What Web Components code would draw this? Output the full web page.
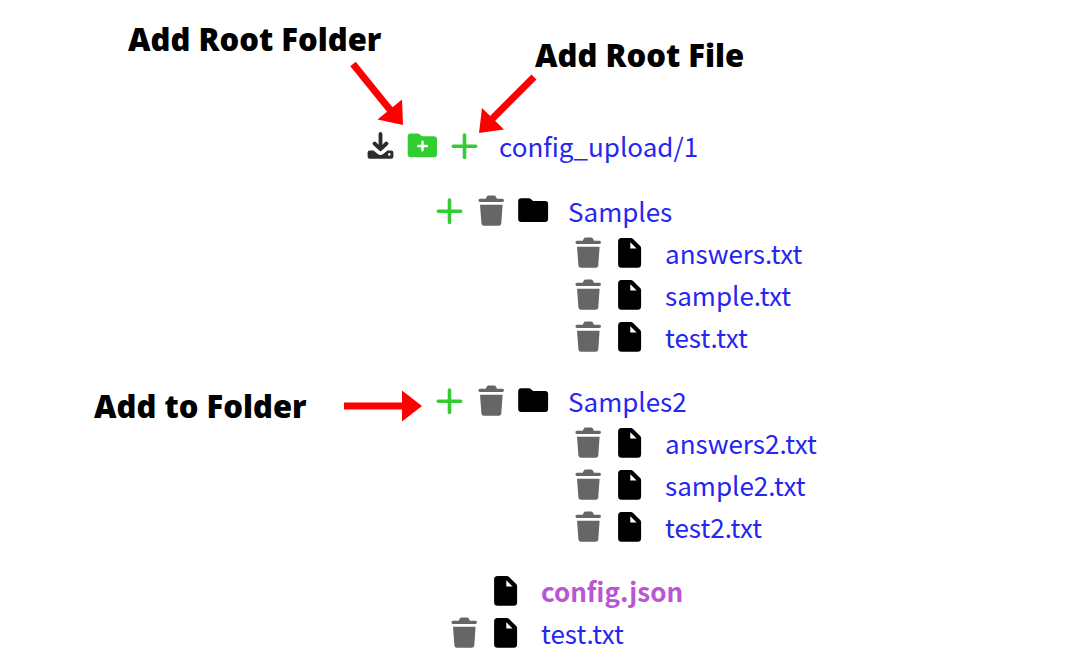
<!DOCTYPE html>
<html lang="en">
<head>
<meta charset="utf-8">
<meta name="viewport" content="width=device-width, initial-scale=1">
<title>config_upload</title>
<style>
  body { margin: 0; background: #fff; font-family: "Noto Sans CJK SC", "Noto Sans", sans-serif; }
</style>
</head>
<body>
<file-manager>
  <tree-root name="config_upload/1">
    <tree-folder name="Samples">
      <tree-file name="answers.txt"></tree-file>
      <tree-file name="sample.txt"></tree-file>
      <tree-file name="test.txt"></tree-file>
    </tree-folder>
    <tree-folder name="Samples2">
      <tree-file name="answers2.txt"></tree-file>
      <tree-file name="sample2.txt"></tree-file>
      <tree-file name="test2.txt"></tree-file>
    </tree-folder>
    <root-files>
      <tree-file name="config.json" locked></tree-file>
      <tree-file name="test.txt"></tree-file>
    </root-files>
  </tree-root>
  <help-callout slot="help" target="root-folder">Add Root Folder</help-callout>
  <help-callout slot="help" target="root-file">Add Root File</help-callout>
  <help-callout slot="help" target="folder">Add to Folder</help-callout>
</file-manager>

<script>
const ICONS = {
  download: `<g fill="none" stroke="#2c2c2c" stroke-linecap="round" stroke-linejoin="round" stroke-width="3.8"><path d="M21.500 7.900V22"/><path d="M15.500 17.500l6 5.700 6-5.700"/></g><path fill="#2c2c2c" fill-rule="evenodd" d="M10.900 24.400h3.600l4.300 3.700q2.700 2 5.400 0l4.300-3.700h3.600q2.300 0 2.300 2.200v4q0 2.200-2.300 2.200H10.900q-2.300 0-2.300-2.200v-4q0-2.200 2.300-2.200zM30.300 27.100a1.300 1.300 0 1 0 0 2.600a1.300 1.300 0 0 0 0-2.600z"/>`,
  folderPlus: `<path fill="#32cd32" d="M9.500 7.500h7q1.200 0 2 .8l1.400 1.300q.8.700 2 .7h11.100q3 0 3 3v15q0 3-3 3H9.700q-3 0-3-3V10.500q0-3 2.800-3z"/><path d="M21.500 15.700v8.600M17.200 20h8.600" stroke="#fff" stroke-width="2.500" stroke-linecap="round"/>`,
  plus: `<path d="M21.500 9v22.400M10.300 20.200h22.400" stroke="#32cd32" stroke-width="3.600" stroke-linecap="round"/>`,
  trash: `<g fill="#666"><path d="M18.500 4.500h5.700q1 0 1.500.8l1.300 2.400h5.400q1.600 0 1.600 1.650t-1.600 1.650H10q-1.600 0-1.600-1.650T10 7.700h5.700L17 5.300q.5-.8 1.500-.8z"/><path d="M10 13.700h22.600l-1.300 18.500q-.2 2.500-2.600 2.500H14q-2.400 0-2.600-2.500z"/></g>`,
  folder: `<path d="M9.200 7.300h7.700q1.200 0 2 .8l1.500 1.300q.8.700 2 .7h10.700q3 0 3 3V28q0 3-3 3H9.200q-3 0-3-3V10.300q0-3 3-3z"/>`,
  file: `<path fill-rule="evenodd" d="M12.500 5h9.500q1 0 1.800.8l7.400 7.200q.9.900.9 2v16.200q0 3.500-3.500 3.500H12.600q-3.500 0-3.500-3.500V8.500q0-3.500 3.400-3.500zM21.300 9.300v6.300h6.300z"/>`
};
const icon = name => `<svg width="42" height="42" viewBox="0 0 42 42" aria-hidden="true">${ICONS[name]}</svg>`;
const action = (name, label) => `<button type="button" aria-label="${label}">${icon(name)}</button>`;

const ROW_CSS = `
  .row { display: flex; height: 42px; }
  button { flex: none; width: 42px; height: 42px; margin: 0; padding: 0; border: 0; background: none; cursor: pointer; }
  svg { display: block; flex: none; }
  a { margin-left: 14px; color: #2626f0; font-size: 26px; line-height: 40px; text-decoration: none; white-space: nowrap; }
`;

class FileManager extends HTMLElement {
  constructor() {
    super();
    this.attachShadow({ mode: "open" }).innerHTML = `
      <style>
        :host { display: block; }
        main { position: relative; margin-left: max(0px, calc(50% - 181px)); padding: 126px 0 16px; }
      </style>
      <main><slot></slot><slot name="help"></slot></main>`;
  }
}

class TreeRoot extends HTMLElement {
  connectedCallback() {
    if (this.shadowRoot) return;
    const name = this.getAttribute("name");
    this.attachShadow({ mode: "open" }).innerHTML = `
      <style>
        :host { display: block; }
        .groups { display: flex; flex-direction: column; gap: 22px; padding-top: 23px; }
        ${ROW_CSS}
      </style>
      <div class="row">
        ${action("download", "Download " + name)}${action("folderPlus", "Add root folder")}${action("plus", "Add root file")}
        <a href="#root">${name}</a>
      </div>
      <div class="groups"><slot></slot></div>`;
  }
}

class TreeFolder extends HTMLElement {
  connectedCallback() {
    if (this.shadowRoot) return;
    const name = this.getAttribute("name");
    this.attachShadow({ mode: "open" }).innerHTML = `
      <style>
        :host { display: block; margin-left: 69px; }
        .children { padding-left: 139px; }
        ${ROW_CSS}
      </style>
      <div class="row">
        ${action("plus", "Add to " + name)}${action("trash", "Delete " + name)}${icon("folder")}
        <a href="#${name}">${name}</a>
      </div>
      <div class="children"><slot></slot></div>`;
  }
}

class RootFiles extends HTMLElement {
  constructor() {
    super();
    this.attachShadow({ mode: "open" }).innerHTML = `
      <style>:host { display: block; margin-left: 84px; }</style>
      <slot></slot>`;
  }
}

class TreeFile extends HTMLElement {
  connectedCallback() {
    if (this.shadowRoot) return;
    const name = this.getAttribute("name");
    const locked = this.hasAttribute("locked");
    this.attachShadow({ mode: "open" }).innerHTML = `
      <style>
        :host { display: block; }
        ${ROW_CSS}
        :host([locked]) .row { padding-left: 42px; }
        :host([locked]) a { color: #ba55d3; font-weight: 700; }
      </style>
      <div class="row">
        ${locked ? "" : action("trash", "Delete " + name)}${icon("file")}
        <a href="#${name}">${name}</a>
      </div>`;
  }
}

const ARROWS = {
  "root-folder": `<svg width="60" height="70" viewBox="0 0 60 70" aria-hidden="true"><path d="M9 9L47 56" stroke="red" stroke-width="7"/><path fill="red" d="M59 70L33.500 64.500L58 44.500z"/></svg>`,
  "root-file": `<svg width="60" height="60" viewBox="0 0 60 60" aria-hidden="true"><path d="M55 4L12 47" stroke="red" stroke-width="7"/><path fill="red" d="M0 60L3 35L25 56.500z"/></svg>`,
  "folder": `<svg width="80" height="32" viewBox="0 0 80 32" aria-hidden="true"><path d="M2 16h60" stroke="red" stroke-width="7"/><path fill="red" d="M60 .5v31L80 16z"/></svg>`
};

class HelpCallout extends HTMLElement {
  connectedCallback() {
    if (this.shadowRoot) return;
    this.attachShadow({ mode: "open" }).innerHTML = `
      <style>
        :host { position: absolute; display: flex; pointer-events: none; color: #000;
                font: 800 31px/40px "Open Sans", sans-serif; white-space: nowrap; }
        svg { display: block; flex: none; }
        :host([target="root-folder"]) { left: -231px; top: 19px; flex-direction: column; width: 276px; }
        :host([target="root-folder"]) svg { align-self: flex-end; margin-top: -4px; }
        :host([target="root-file"]) { left: 120px; top: 35px; flex-direction: column; }
        :host([target="root-file"]) span { padding-left: 56px; }
        :host([target="root-file"]) svg { margin-top: -2px; }
        :host([target="folder"]) { left: -265px; top: 386px; width: 328px; justify-content: space-between; align-items: center; }
      </style>
      <span><slot></slot></span>${ARROWS[this.getAttribute("target")]}`;
  }
}

customElements.define("file-manager", FileManager);
customElements.define("tree-root", TreeRoot);
customElements.define("tree-folder", TreeFolder);
customElements.define("root-files", RootFiles);
customElements.define("tree-file", TreeFile);
customElements.define("help-callout", HelpCallout);
</script>
</body>
</html>
